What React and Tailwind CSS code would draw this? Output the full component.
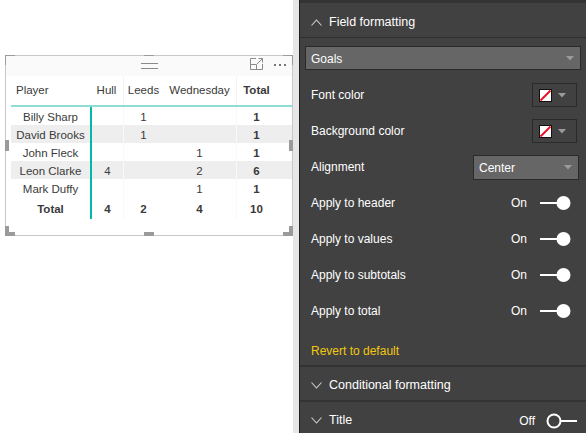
import React from 'react';

const rows = [
  { name: 'Billy Sharp', hull: '', leeds: '1', wed: '', total: '1' },
  { name: 'David Brooks', hull: '', leeds: '1', wed: '', total: '1', band: true },
  { name: 'John Fleck', hull: '', leeds: '', wed: '1', total: '1' },
  { name: 'Leon Clarke', hull: '4', leeds: '', wed: '2', total: '6', band: true },
  { name: 'Mark Duffy', hull: '', leeds: '', wed: '1', total: '1' },
];

const cols = 'grid grid-cols-[79px_33px_40px_73px_40px]';

function Caret() {
  return (
    <svg width="8" height="5" viewBox="0 0 8 5">
      <path d="M0 0 L8 0 L4 4.5 Z" fill="#9a9a9a" />
    </svg>
  );
}

function Swatch() {
  return (
    <div className="flex h-[24px] w-[45px] items-center gap-[6px] border border-[#2a2a2a] pl-[6px]">
      <svg width="13" height="13" viewBox="0 0 13 13">
        <rect x="0.5" y="0.5" width="12" height="12" fill="#fff" stroke="#111" />
        <line x1="1.5" y1="11.5" x2="11.5" y2="1.5" stroke="#e81123" strokeWidth="2" />
      </svg>
      <Caret />
    </div>
  );
}

function Toggle({ on }) {
  return on ? (
    <svg width="32" height="16" viewBox="0 0 32 16">
      <line x1="0" y1="8" x2="20" y2="8" stroke="#fff" strokeWidth="2" />
      <circle cx="23.5" cy="8" r="7" fill="#fff" />
    </svg>
  ) : (
    <svg width="32" height="16" viewBox="0 0 32 16">
      <circle cx="8" cy="8" r="6.5" fill="none" stroke="#fff" strokeWidth="2" />
      <line x1="14.5" y1="8" x2="31" y2="8" stroke="#fff" strokeWidth="2" />
    </svg>
  );
}

function Chevron({ up }) {
  return (
    <svg width="11" height="7" viewBox="0 0 11 7">
      <path d={up ? 'M0.5 6.5 L5.5 1 L10.5 6.5' : 'M0.5 0.5 L5.5 6 L10.5 0.5'} fill="none" stroke="#cfcfcf" strokeWidth="1.1" />
    </svg>
  );
}

function ToggleRow({ label, on = true }) {
  return (
    <div className="flex h-[36px] items-center pl-[11px] pr-[14px]">
      <span className="flex-1">{label}</span>
      <span className="mr-[13px]">On</span>
      <Toggle on={on} />
    </div>
  );
}

function Handle({ className }) {
  return <div className={`absolute bg-[#9a9a9a] ${className}`} />;
}

export default function App() {
  return (
    <div className="flex h-[433px] w-[586px] overflow-hidden bg-white font-['Liberation_Sans',Arial,sans-serif]">
      {/* report canvas */}
      <div className="w-[293px] shrink-0 pl-[5px] pt-[55px]">
        <div className="relative h-[181px] w-[288px] border border-[#c8c8c8]">
          <Handle className="-left-[1px] -top-[1px] h-[4px] w-[10px]" />
          <Handle className="-left-[1px] -top-[1px] h-[10px] w-[4px]" />
          <Handle className="-right-[1px] -top-[1px] h-[4px] w-[10px]" />
          <Handle className="-right-[1px] -top-[1px] h-[10px] w-[4px]" />
          <Handle className="-bottom-[1px] -left-[1px] h-[4px] w-[10px]" />
          <Handle className="-bottom-[1px] -left-[1px] h-[10px] w-[4px]" />
          <Handle className="-bottom-[1px] -right-[1px] h-[4px] w-[10px]" />
          <Handle className="-bottom-[1px] -right-[1px] h-[10px] w-[4px]" />
          <Handle className="-top-[1px] left-[138px] h-[4px] w-[10px]" />
          <Handle className="-bottom-[1px] left-[138px] h-[4px] w-[10px]" />
          <Handle className="-left-[1px] top-[84px] h-[11px] w-[4px]" />
          <Handle className="-right-[1px] top-[84px] h-[11px] w-[4px]" />

          <div className="relative flex h-[20px] items-center justify-center bg-[#fafafa]">
            <div className="flex w-[17px] flex-col gap-[4px]">
              <div className="h-[1px] bg-[#8a8a8a]" />
              <div className="h-[1px] bg-[#8a8a8a]" />
            </div>
            <div className="absolute right-[6px] top-[1px] flex items-center gap-[10px]">
              <svg width="15" height="14" viewBox="0 0 15 14">
                <path d="M7 1.5 H1.5 V12.5 H13.5 V7" fill="none" stroke="#8a8a8a" />
                <path d="M1.5 7.5 H7.5 V12.5" fill="none" stroke="#8a8a8a" />
                <path d="M8 7 L13.5 1.5 M9.5 1.5 H13.5 V5.5" fill="none" stroke="#8a8a8a" />
              </svg>
              <div className="mt-[2px] flex gap-[3px]">
                <div className="h-[2px] w-[2px] bg-[#777]" />
                <div className="h-[2px] w-[2px] bg-[#777]" />
                <div className="h-[2px] w-[2px] bg-[#777]" />
              </div>
            </div>
          </div>

          <div className="pl-[5px] text-[11.5px] text-[#3a3a3a]">
            <div className={`${cols} h-[31px] items-center border-b-2 border-[#8fdcd5] pt-[1px]`}>
              <div className="pl-[5px]">Player</div>
              <div className="flex h-full items-center justify-center">Hull</div>
              <div className="flex h-full items-center justify-center border-l border-[#f2f2f2]">Leeds</div>
              <div className="flex h-full items-center justify-center">Wednesday</div>
              <div className="flex h-full items-center justify-center border-l border-[#f2f2f2] font-bold">Total</div>
            </div>
            {rows.map((r) => (
              <div key={r.name} className={`${cols} h-[18px] items-center ${r.band ? 'bg-[#eeeeee]' : ''}`}>
                <div className="pt-[2px] text-center">{r.name}</div>
                <div className="flex h-full items-center justify-center border-l-2 border-[#01b8aa] pt-[2px]">{r.hull}</div>
                <div className="flex h-full items-center justify-center border-l border-[#f8f8f8] pt-[2px]">{r.leeds}</div>
                <div className="pt-[2px] text-center">{r.wed}</div>
                <div className="flex h-full items-center justify-center border-l border-[#f8f8f8] pt-[2px] font-bold">{r.total}</div>
              </div>
            ))}
            <div className={`${cols} h-[22px] items-center font-bold`}>
              <div className="pt-[4px] text-center">Total</div>
              <div className="flex h-full items-center justify-center border-l-2 border-[#01b8aa] pt-[4px]">4</div>
              <div className="flex h-full items-center justify-center border-l border-[#f8f8f8] pt-[4px]">2</div>
              <div className="pt-[4px] text-center">4</div>
              <div className="flex h-full items-center justify-center border-l border-[#f8f8f8] pt-[4px]">10</div>
            </div>
          </div>
        </div>
      </div>

      {/* scroll strip */}
      <div className="w-[6px] shrink-0 bg-[#e6e6e6]" />
      <div className="w-[1px] shrink-0 bg-[#1e1e1e]" />

      {/* format pane */}
      <div className="flex-1 border-t-[3px] border-[#333] bg-[#414141] text-[12px] text-white">
        <div className="flex h-[35px] items-center gap-[7px] border-b border-[#303030] pl-[11px] pt-[4px]">
          <Chevron up />
          <span className="text-[12.5px]">Field formatting</span>
        </div>
        <div className="px-[5px] pt-[8px]">
          <div className="flex h-[24px] items-center justify-between border border-[#2a2a2a] bg-[#666] pl-[5px] pr-[6px]">
            <span className="pt-[1px]">Goals</span>
            <Caret />
          </div>
        </div>
        <div className="mt-[7px]">
          <div className="flex h-[36px] items-center pl-[11px] pr-[9px]">
            <span className="flex-1">Font color</span>
            <Swatch />
          </div>
          <div className="flex h-[36px] items-center pl-[11px] pr-[9px]">
            <span className="flex-1">Background color</span>
            <Swatch />
          </div>
          <div className="flex h-[36px] items-center pl-[11px] pr-[7px]">
            <span className="flex-1">Alignment</span>
            <div className="flex h-[25px] w-[106px] items-center justify-between border border-[#2a2a2a] bg-[#666] pl-[5px] pr-[6px]">
              <span className="pt-[1px]">Center</span>
              <Caret />
            </div>
          </div>
          <ToggleRow label="Apply to header" />
          <ToggleRow label="Apply to values" />
          <ToggleRow label="Apply to subtotals" />
          <ToggleRow label="Apply to total" />
        </div>
        <div className="flex h-[38px] items-center border-b-2 border-[#333] pl-[11px] pt-[7px] text-[#f2c811]">
          Revert to default
        </div>
        <div className="flex h-[35px] items-center gap-[7px] border-b-2 border-[#333] pl-[11px] pt-[3px]">
          <Chevron />
          <span className="text-[12.5px]">Conditional formatting</span>
        </div>
        <div className="flex h-[36px] items-center gap-[7px] pl-[11px] pr-[8px] pt-[1px]">
          <Chevron />
          <span className="flex-1 text-[12.5px]">Title</span>
          <span className="mr-[4px]">Off</span>
          <Toggle on={false} />
        </div>
      </div>
    </div>
  );
}
